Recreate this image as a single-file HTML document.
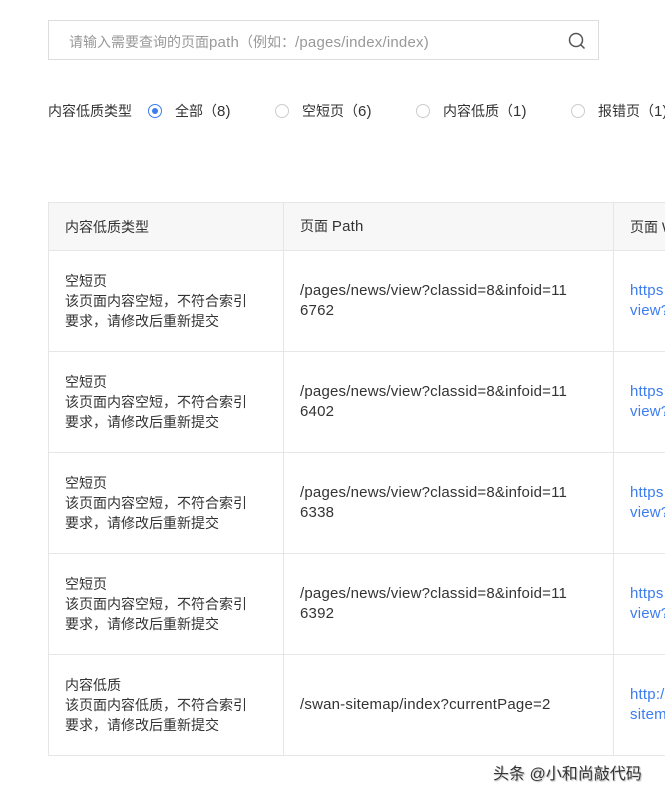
<!DOCTYPE html><html><head><meta charset="utf-8"><style>
*{margin:0;padding:0;box-sizing:border-box}
body{width:665px;height:794px;overflow:hidden;background:#fff;font-family:"Liberation Sans","Noto Sans CJK SC",sans-serif;color:#333;font-size:14px;position:relative}
.lat{font-size:15px;letter-spacing:0.2px}
.search{position:absolute;left:48px;top:20px;width:551px;height:40px;border:1px solid #ddd;}
.search span{position:absolute;left:20px;top:11px;color:#999;font-size:14px;white-space:nowrap}
.radio{position:absolute;top:101px;font-size:14px;white-space:nowrap}
.r{position:absolute;top:104px;width:14px;height:14px;border:1px solid #ccc;border-radius:50%}
.r.on{border-color:#3b7cf0}
.r.on::after{content:"";position:absolute;left:3px;top:3px;width:6px;height:6px;border-radius:50%;background:#3b7cf0}
table{position:absolute;left:48px;top:202px;border-collapse:collapse;width:700px;table-layout:fixed}
td,th{border:1px solid #e6e6e6;padding:0 16px;font-weight:normal;text-align:left;vertical-align:middle;line-height:20px;white-space:nowrap}
th{background:#f7f7f7;height:48px}
td{height:101px}
a{color:#3b7cf0;text-decoration:none}
.wm{position:absolute;left:493px;top:760px;font-size:16px;color:#333;text-shadow:0 0 3px #fff,1px 1px 1px #aaa}
</style></head><body>
<div class="search"><span>请输入需要查询的页面<span class="lat" style="position:static;font-size:15px">path</span>（例如：<span class="lat" style="position:static;font-size:15px">/pages/index/index)</span></span>
<svg style="position:absolute;left:519px;top:11px" width="18" height="18" viewBox="0 0 18 18"><circle cx="8" cy="8" r="6.5" fill="none" stroke="#555" stroke-width="1.5"/><path d="M12.8 12.8L16.5 16.5" stroke="#555" stroke-width="1.5"/></svg></div>
<div class="radio" style="left:48px">内容低质类型</div>
<div class="r on" style="left:148px"></div><div class="radio" style="left:175px">全部（<span class="lat">8)</span></div>
<div class="r" style="left:275px"></div><div class="radio" style="left:302px">空短页（<span class="lat">6)</span></div>
<div class="r" style="left:416px"></div><div class="radio" style="left:443px">内容低质（<span class="lat">1)</span></div>
<div class="r" style="left:571px"></div><div class="radio" style="left:598px">报错页（<span class="lat">1)</span></div>
<table><colgroup><col style="width:235px"><col style="width:330px"><col style="width:135px"></colgroup>
<tr><th>内容低质类型</th><th>页面 <span class="lat">Path</span></th><th>页面 Web</th></tr>
<tr><td>空短页<br>该页面内容空短，不符合索引<br>要求，请修改后重新提交</td><td class="lat">/pages/news/view?classid=8&amp;infoid=11<br>6762</td><td class="lat"><a>https<br>view?</a></td></tr>
<tr><td>空短页<br>该页面内容空短，不符合索引<br>要求，请修改后重新提交</td><td class="lat">/pages/news/view?classid=8&amp;infoid=11<br>6402</td><td class="lat"><a>https<br>view?</a></td></tr>
<tr><td>空短页<br>该页面内容空短，不符合索引<br>要求，请修改后重新提交</td><td class="lat">/pages/news/view?classid=8&amp;infoid=11<br>6338</td><td class="lat"><a>https<br>view?</a></td></tr>
<tr><td>空短页<br>该页面内容空短，不符合索引<br>要求，请修改后重新提交</td><td class="lat">/pages/news/view?classid=8&amp;infoid=11<br>6392</td><td class="lat"><a>https<br>view?</a></td></tr>
<tr><td>内容低质<br>该页面内容低质，不符合索引<br>要求，请修改后重新提交</td><td class="lat">/swan-sitemap/index?currentPage=2</td><td class="lat"><a>http:/<br>sitem</a></td></tr>
</table>
<div class="wm">头条 @小和尚敲代码</div>
</body></html>
